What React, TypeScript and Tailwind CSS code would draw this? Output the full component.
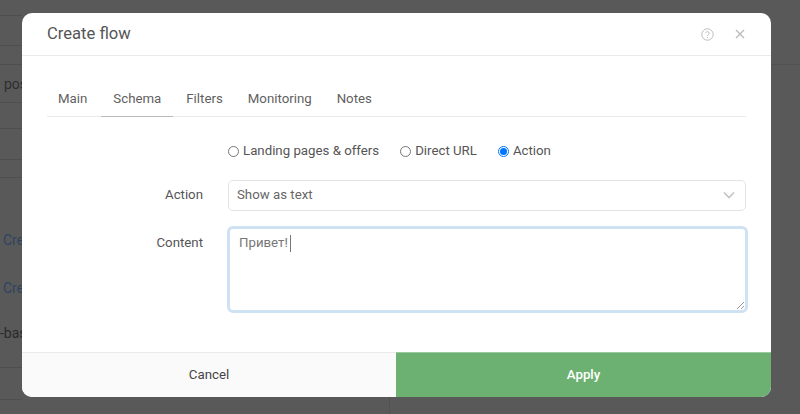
const rows = [
  { h: 'h-[16px]', text: '' },
  { h: 'h-[30px]', text: '' },
  { h: 'h-[19px]', text: '' },
  { h: 'h-[38px]', text: 'pos' },
  { h: 'h-[26px]', text: '' },
  { h: 'h-[31px]', text: '' },
  { h: 'h-[18px]', text: '' },
  { h: 'h-[190px]', text: '' },
  { h: 'h-[32px]', text: '' },
];

function Radio({ label, checked }: { label: string; checked?: boolean }) {
  return (
    <label className="flex items-center gap-[4px]">
      {checked ? (
        <span className="flex h-[11px] w-[11px] items-center justify-center rounded-full border border-[#0075ff] bg-white">
          <span className="h-[7px] w-[7px] rounded-full bg-[#0075ff]" />
        </span>
      ) : (
        <span className="h-[11px] w-[11px] rounded-full border border-[#767676] bg-white" />
      )}
      <span>{label}</span>
    </label>
  );
}

export default function App() {
  return (
    <div className="relative h-[414px] w-[800px] overflow-hidden bg-[#595959] font-['Roboto',sans-serif] text-[13.25px] text-[#555]">
      {/* page behind the overlay */}
      <div className="flex w-[22px] flex-col">
        {rows.map((r, i) => (
          <div key={i} className={`${r.h} whitespace-nowrap border-b border-[#4e4e4e] pl-[4px] pt-[6px] text-[14px] leading-[26px] text-[#2e2e2e]`}>
            {r.text}
          </div>
        ))}
      </div>
      <div className="absolute right-0 top-[64px] h-px w-[29px] bg-[#525252]" />
      <div className="absolute left-[389px] top-[397px] h-[17px] w-px bg-[#525252]" />
      <div className="absolute left-[3px] top-[230px] text-[14px] text-[#2f4360]">Cre</div>
      <div className="absolute left-[3px] top-[278px] text-[14px] text-[#2f4360]">Cre</div>
      <div className="absolute left-0 top-[323px] text-[14px] text-[#2a2a2a]">-bas</div>

      {/* modal */}
      <div className="absolute left-[22px] top-[13px] flex h-[384px] w-[749px] flex-col overflow-hidden rounded-[10px] bg-white">
        <div className="flex h-[43px] items-center justify-between border-b border-[#eaeaea] pl-[25px] pr-[26px]">
          <div className="pt-[1px] text-[16.6px] text-[#555]">Create flow</div>
          <div className="flex items-center gap-[21px] text-[#bbb]">
            <svg width="13" height="13" viewBox="0 0 13 13" fill="none" stroke="currentColor">
              <circle cx="6.5" cy="6.5" r="5.7" />
              <path d="M4.8 5.2c0-1 .8-1.6 1.7-1.6s1.7.6 1.7 1.5c0 1.3-1.7 1.3-1.7 2.6" />
              <path d="M6.5 9v1" />
            </svg>
            <svg width="10" height="10" viewBox="0 0 10 10" fill="none" stroke="currentColor" strokeWidth="1.4">
              <path d="M1 1l8 8M9 1l-8 8" />
            </svg>
          </div>
        </div>

        <div className="flex-1 px-[25px] pt-[27px]">
          <div className="flex h-[34px] border-b border-[#eaeaea] text-[#5f5f5f]">
            <div className="pl-[11px] pr-[14px] pt-[6px]">Main</div>
            <div className="h-[34px] border-b border-[#bbb] px-[12px] pt-[6px]">Schema</div>
            <div className="px-[13px] pt-[6px]">Filters</div>
            <div className="px-[12px] pt-[6px]">Monitoring</div>
            <div className="px-[13px] pt-[6px]">Notes</div>
          </div>

          <div className="ml-[181px] mt-[26px] flex h-[16px] items-center gap-[21px]">
            <Radio label="Landing pages & offers" />
            <Radio label="Direct URL" />
            <Radio label="Action" checked />
          </div>

          <div className="mt-[21px] flex items-center">
            <div className="w-[156px] pb-[2px] text-right">Action</div>
            <div className="ml-[25px] flex h-[31px] w-[518px] items-center justify-between rounded-[5px] border border-[#e3e3e3] pb-[1px] pl-[8px] pr-[10px] text-[#666]">
              <span>Show as text</span>
              <svg width="12" height="8" viewBox="0 0 12 8" fill="none" stroke="#c4c4c4" strokeWidth="1.6">
                <path d="M1 1.5l5 5 5-5" />
              </svg>
            </div>
          </div>

          <div className="mt-[15px] flex">
            <div className="w-[156px] shrink-0 pt-[7px] text-right">Content</div>
            <div className="relative ml-[24px] h-[87px] w-[521px] shrink-0 rounded-[6px] border-[3px] border-[#cfe2f3] pl-[9px] pt-[4px] text-[#777]">
              <span>Привет!</span>
              <span className="ml-[2px] inline-block h-[17px] w-px bg-[#777] align-middle" />
              <svg className="absolute bottom-0 right-0" width="9" height="9" viewBox="0 0 9 9" stroke="#999" fill="none">
                <path d="M1 8l7-7M5 8l3-3" />
              </svg>
            </div>
          </div>
        </div>

        <div className="flex h-[45px]">
          <div className="flex w-[374px] items-center justify-center border-t border-[#eaeaea] bg-[#fafafa] text-[#444]">
            Cancel
          </div>
          <div className="flex flex-1 items-center justify-center border-t border-[#9cc89f] bg-[#6db172] font-medium text-white">Apply</div>
        </div>
      </div>
    </div>
  );
}
